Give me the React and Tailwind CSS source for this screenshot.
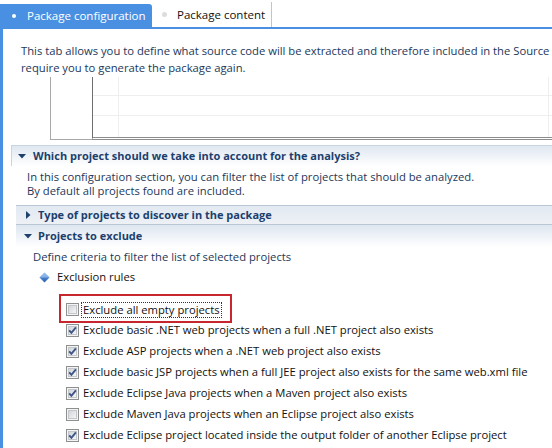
import React from "react";

function Check({ checked }) {
  return (
    <svg width="13" height="13" viewBox="0 0 13 13" className="shrink-0">
      <defs>
        <linearGradient id="cbg" x1="0" y1="0" x2="1" y2="1">
          <stop offset="0" stopColor="#cfd2d7" />
          <stop offset="1" stopColor="#f8f8f8" />
        </linearGradient>
      </defs>
      <rect x="0.5" y="0.5" width="12" height="12" fill="#f4f4f4" stroke="#8e8f8f" />
      <rect x="2.5" y="2.5" width="8" height="8" fill="url(#cbg)" stroke="#c3c6cb" />
      {checked && (
        <path d="M3.2 6.4 L5.4 8.9 L9.9 3.4" fill="none" stroke="#3f5487" strokeWidth="1.9" />
      )}
    </svg>
  );
}

function Down() {
  return (
    <svg width="8" height="5" viewBox="0 0 8 5" className="shrink-0">
      <polygon points="0,0 8,0 4,4.5" fill="#1f3f6d" />
    </svg>
  );
}

function Right() {
  return (
    <svg width="5" height="8" viewBox="0 0 5 8" className="shrink-0">
      <polygon points="0,0 4.5,4 0,8" fill="#1f3f6d" />
    </svg>
  );
}

function Diamond() {
  return (
    <svg width="11" height="11" viewBox="0 0 11 11" className="shrink-0">
      <defs>
        <linearGradient id="dg" x1="0" y1="0" x2="0" y2="1">
          <stop offset="0" stopColor="#8db6ea" />
          <stop offset="0.5" stopColor="#4d84d0" />
          <stop offset="1" stopColor="#2a5ba8" />
        </linearGradient>
      </defs>
      <polygon points="5.5,0.5 10.5,5.5 5.5,10.5 0.5,5.5" fill="url(#dg)" />
      <polygon points="5.5,0.5 10.5,5.5 5.5,5.5 0.5,5.5" fill="#a9c8f0" opacity="0.6" />
    </svg>
  );
}

const rules = [
  [true, "Exclude basic .NET web projects when a full .NET project also exists"],
  [true, "Exclude ASP projects when a .NET web project also exists"],
  [true, "Exclude basic JSP projects when a full JEE project also exists for the same web.xml file"],
  [true, "Exclude Eclipse Java projects when a Maven project also exists"],
  [false, "Exclude Maven Java projects when an Eclipse project also exists"],
  [true, "Exclude Eclipse project located inside the output folder of another Eclipse project"],
];

export default function App() {
  return (
    <div className="w-[552px] h-[448px] overflow-hidden bg-white font-['Open_Sans',sans-serif] text-[11.25px] flex flex-col">
      {/* Tabs */}
      <div className="h-[27px] flex items-end shrink-0">
        <div className="h-[23px] w-[152px] bg-[#4a90e2] rounded-tr-[3px] flex items-center text-white text-[11.5px]">
          <span className="ml-[12px] w-[4px] h-[4px] rounded-full bg-white" />
          <span className="ml-[11px]">Package configuration</span>
        </div>
        <div className="h-[25px] w-[120px] bg-white border-r border-[#c4c4c4] flex items-center text-[#111] text-[11.5px]">
          <span className="ml-[10px] w-[5px] h-[5px] rounded-full bg-[#dcdcdc]" />
          <span className="ml-[10px]">Package content</span>
        </div>
      </div>

      {/* Panel */}
      <div className="flex-1 border-t-2 border-l-[3px] border-[#4a90e2] flex flex-col">
        <p className="pt-[13px] pl-[18px] leading-[17px] text-[#22375a] whitespace-nowrap">
          This tab allows you to define what source code will be extracted and therefore included in the Source
          <br />
          require you to generate the package again.
        </p>

        {/* table fragment */}
        <div className="mt-[1px] ml-[47px] h-[63px] flex">
          <div className="w-[42px] border-l border-b border-[#a8a8a8]" />
          <div className="flex-1 border-l border-l-[#6f6f6f] border-b-[3px] border-double border-b-[#8c8c8c] flex flex-col">
            <div className="h-[19px] border-b border-[#eeeeee] flex">
              <div className="w-[26px] border-r border-[#eeeeee]" />
              <div className="w-[430px] border-r border-[#eeeeee]" />
            </div>
            <div className="h-[20px] border-b border-[#eeeeee] flex">
              <div className="w-[26px] border-r border-[#eeeeee]" />
              <div className="w-[430px] border-r border-[#eeeeee]" />
            </div>
            <div className="flex-1 flex">
              <div className="w-[26px] border-r border-[#eeeeee]" />
              <div className="w-[430px] border-r border-[#eeeeee]" />
            </div>
          </div>
        </div>

        {/* Section */}
        <div className="mt-[5px] ml-[8px] flex flex-col">
          <div className="h-[21px] border-t border-l border-[#c9d5e2] bg-gradient-to-b from-[#dfe7f1] to-white flex items-center">
            <span className="ml-[6px]"><Down /></span>
            <span className="ml-[7px] text-[11px] font-bold text-[#1c3f6e] whitespace-nowrap">
              Which project should we take into account for the analysis?
            </span>
          </div>
          <p className="mt-[4px] pl-[16px] leading-[14px] text-[#22375a] whitespace-nowrap">
            In this configuration section, you can filter the list of projects that should be analyzed.
            <br />
            By default all projects found are included.
          </p>

          <div className="mt-[7px] ml-[5px] flex flex-col">
            <div className="h-[20px] border-y border-[#b9c6d3] bg-gradient-to-b from-[#e2e9f2] to-[#edf1f6] flex items-center">
              <span className="ml-[10px]"><Right /></span>
              <span className="ml-[7px] text-[11px] font-bold text-[#1c3f6e] whitespace-nowrap">
                Type of projects to discover in the package
              </span>
            </div>
            <div className="h-[22px] bg-gradient-to-b from-[#dde6f0] to-white flex items-center">
              <span className="ml-[8px]"><Down /></span>
              <span className="ml-[6px] text-[11px] font-bold text-[#1c3f6e] whitespace-nowrap">Projects to exclude</span>
            </div>
            <p className="mt-[3px] pl-[17px] leading-[14px] text-[#22375a] whitespace-nowrap">
              Define criteria to filter the list of selected projects
            </p>
            <div className="mt-[5px] h-[16px] pl-[23px] flex items-center text-[#111]">
              <Diamond />
              <span className="ml-[7px]">Exclusion rules</span>
            </div>

            <div className="mt-[14px] pl-[50px] flex flex-col text-[#111]">
              <div className="relative h-[21px] flex items-center">
                <div className="absolute left-[-7px] top-[-5px] w-[173px] h-[29px] border-2 border-[#c8262d]" />
                <Check checked={false} />
                <span className="ml-[3px] px-[1px] leading-[14px] outline-1 outline-dotted outline-[#333] whitespace-nowrap">
                  Exclude all empty projects
                </span>
              </div>
              {rules.map(([c, t]) => (
                <div key={t} className="h-[21px] flex items-center">
                  <Check checked={c} />
                  <span className="ml-[4px] whitespace-nowrap">{t}</span>
                </div>
              ))}
            </div>
          </div>
        </div>
      </div>
    </div>
  );
}
